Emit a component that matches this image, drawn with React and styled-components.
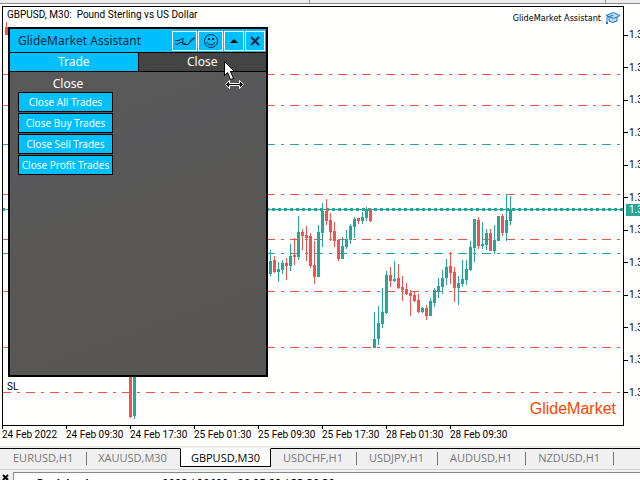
import React from 'react'
import styled, { createGlobalStyle } from 'styled-components'

const UP = '#26a69a'
const DOWN = '#ef5350'

// x, high, body top, body bottom, low, colour
const candles = [
  [6, 22, 27, 35, 35, DOWN],
  [130, 360, 360, 417, 418, DOWN],
  [134, 360, 360, 416, 419, UP],
  [270, 250, 261, 274, 276, UP],
  [274, 256, 260, 272, 273, DOWN],
  [278, 262, 269, 272, 282, UP],
  [282, 260, 263, 270, 274, UP],
  [286, 258, 263, 266, 280, DOWN],
  [290, 244, 256, 266, 271, UP],
  [294, 238, 255, 257, 265, DOWN],
  [298, 216, 232, 257, 260, UP],
  [302, 229, 232, 236, 250, DOWN],
  [306, 226, 235, 238, 261, DOWN],
  [310, 233, 236, 266, 268, DOWN],
  [314, 241, 265, 277, 284, DOWN],
  [318, 225, 232, 277, 277, UP],
  [322, 203, 211, 233, 247, UP],
  [326, 199, 211, 221, 225, DOWN],
  [330, 213, 220, 232, 241, DOWN],
  [334, 222, 231, 241, 247, DOWN],
  [338, 240, 240, 259, 261, DOWN],
  [342, 237, 246, 259, 259, UP],
  [346, 230, 239, 247, 249, UP],
  [350, 224, 226, 240, 244, UP],
  [354, 217, 219, 227, 238, UP],
  [358, 218, 218, 221, 224, DOWN],
  [362, 212, 217, 221, 224, UP],
  [366, 207, 210, 218, 221, UP],
  [370, 209, 209, 221, 222, DOWN],
  [374, 312, 339, 348, 348, UP],
  [378, 306, 323, 339, 345, UP],
  [382, 288, 312, 324, 328, UP],
  [386, 271, 275, 313, 314, UP],
  [390, 267, 275, 281, 287, DOWN],
  [394, 261, 279, 281, 282, UP],
  [398, 264, 278, 288, 289, DOWN],
  [402, 276, 287, 290, 301, DOWN],
  [406, 283, 289, 294, 295, DOWN],
  [410, 290, 293, 296, 316, DOWN],
  [414, 292, 295, 301, 302, DOWN],
  [418, 294, 300, 312, 313, DOWN],
  [422, 307, 308, 312, 313, UP],
  [426, 305, 308, 316, 320, DOWN],
  [430, 298, 301, 316, 316, UP],
  [434, 288, 290, 303, 307, UP],
  [438, 278, 286, 291, 298, UP],
  [442, 270, 278, 287, 294, UP],
  [446, 259, 267, 278, 285, UP],
  [450, 252, 266, 273, 284, DOWN],
  [454, 267, 272, 288, 302, DOWN],
  [458, 276, 283, 288, 305, UP],
  [462, 260, 279, 284, 287, UP],
  [466, 260, 269, 280, 285, UP],
  [470, 241, 247, 270, 271, UP],
  [474, 219, 219, 248, 262, UP],
  [478, 217, 220, 246, 249, DOWN],
  [482, 222, 244, 246, 249, UP],
  [486, 229, 233, 245, 250, UP],
  [490, 229, 233, 251, 251, DOWN],
  [494, 225, 240, 251, 254, UP],
  [498, 216, 216, 241, 241, UP],
  [502, 214, 216, 233, 236, DOWN],
  [506, 194, 220, 233, 241, UP],
  [510, 196, 210, 221, 225, UP],
]

const levels = [
  [74, DOWN],
  [105, DOWN],
  [144, UP],
  [194, DOWN],
  [239, DOWN],
  [253, UP],
  [291, DOWN],
  [347, DOWN],
  [392, DOWN],
]

const dates = [
  '24 Feb 2022',
  '24 Feb 09:30',
  '24 Feb 17:30',
  '25 Feb 01:30',
  '25 Feb 09:30',
  '25 Feb 17:30',
  '28 Feb 01:30',
  '28 Feb 09:30',
]

const symbols = [
  'EURUSD,H1',
  'XAUUSD,M30',
  'GBPUSD,M30',
  'USDCHF,H1',
  'USDJPY,H1',
  'AUDUSD,H1',
  'NZDUSD,H1',
]

const actions = [
  'Close All Trades',
  'Close Buy Trades',
  'Close Sell Trades',
  'Close Profit Trades',
]

const GlobalStyle = createGlobalStyle`
  * {
    box-sizing: border-box;
  }
  body {
    margin: 0;
    background: #f0f0f0;
  }
  button {
    margin: 0;
    padding: 0;
    border: 0;
    border-radius: 0;
    background: none;
    color: inherit;
    font: inherit;
    white-space: nowrap;
  }
`

const Terminal = styled.main`
  display: flex;
  flex-direction: column;
  height: 100vh;
  overflow: hidden;
  color: #000;
  font-family: Roboto, 'Liberation Sans', sans-serif;
  font-size: 10px;
  line-height: 12px;
`

const ToolbarEdge = styled.div`
  display: flex;
  flex: none;
  justify-content: space-between;
  height: 4px;
  padding: 0 34px 0 309px;
  border-bottom: 1px solid #888;
  background: #ececec;

  i {
    width: 1px;
    background: #999;
  }
`

const ChartWindow = styled.section`
  display: flex;
  flex: none;
  flex-direction: column;
  padding: 2px 0 0 2px;
  background: #fffffd;
  border-bottom: 1px solid #e2e2e2;
`

const ChartRow = styled.div`
  display: flex;
`

const Plot = styled.div`
  position: relative;
  flex: 1;
  min-width: 0;
  border: 1px solid #000;
`

const Drawing = styled.svg`
  display: block;
  width: 100%;
  height: 418px;
`

const ChartTitle = styled.h1`
  position: absolute;
  top: 2px;
  left: 4px;
  margin: 0;
  font-size: inherit;
  font-weight: normal;
  white-space: pre;
`

const ExpertName = styled.div`
  position: absolute;
  top: 4px;
  right: 2px;
  display: flex;
  align-items: center;
  gap: 4px;
  font-family: 'DejaVu Sans Condensed', 'DejaVu Sans', sans-serif;
  font-size: 9px;

  svg {
    display: block;
  }
`

const StopLabel = styled.span`
  position: absolute;
  bottom: 32px;
  left: 4px;
`

const Watermark = styled.span`
  position: absolute;
  right: 7px;
  bottom: 6px;
  color: #ff4500;
  font-family: 'Liberation Sans', Arial, sans-serif;
  font-size: 16px;
  line-height: 20px;
`

const PriceAxis = styled.div`
  position: relative;
  display: flex;
  flex: none;
  flex-direction: column;
  justify-content: space-between;
  width: 16px;
  padding: 23px 0 27px;
  overflow: hidden;
`

const Price = styled.span`
  display: flex;
  align-items: center;
  gap: 1px;
  height: 12px;

  &::before {
    flex: none;
    width: 4px;
    height: 1px;
    background: #000;
    content: '';
  }
`

const Bid = styled.span`
  position: absolute;
  top: 198px;
  right: 0;
  left: 2px;
  padding-left: 3px;
  background: ${UP};
  color: #fff;
  line-height: 12px;
`

const DateAxis = styled.div`
  display: flex;
  height: 20px;
`

const DateMark = styled.span`
  flex: none;
  width: 64px;
  white-space: nowrap;

  &::before {
    display: block;
    width: 1px;
    height: 3px;
    background: #000;
    content: '';
  }
`

const Panel = styled.section`
  position: absolute;
  top: 20px;
  left: 5px;
  width: 260px;
  height: 350px;
  border: 2px solid #000;
  background: linear-gradient(160deg, #585858 0%, #595959 20%, #58585a 36%, #585753 60%, #575652 100%);
  color: #fff;
  font-family: 'Noto Sans', 'Open Sans', sans-serif;
  font-size: 12px;
`

const PanelHeader = styled.header`
  display: flex;
  align-items: center;
  gap: 1px;
  height: 24px;
  padding: 0 1px 0 8px;
  border-bottom: 1px solid #000;
  background: #00bfff;
  color: #10283c;
`

const PanelTitle = styled.h2`
  flex: 1;
  margin: 0;
  font-size: 12px;
  font-weight: normal;
  line-height: 16px;
`

const IconButton = styled.button`
  display: flex;
  align-items: center;
  justify-content: center;
  width: ${({ $wide }) => ($wide ? 25 : 20)}px;
  height: 20px;
  border: 1px solid #fff;
`

const PanelTabs = styled.div`
  display: flex;
  height: 19px;
  border-bottom: 1px solid #000;
`

const PanelTab = styled.button`
  flex: 1;
  background: ${({ $active }) => ($active ? '#00bfff' : '#444')};
  line-height: 18px;

  & + & {
    border-left: 1px solid #000;
  }
`

const Actions = styled.div`
  display: flex;
  flex-direction: column;
  gap: 1px;
  width: 111px;
  padding: 4px 8px;
`

const GroupTitle = styled.h3`
  margin: 0;
  padding-left: 5px;
  font-size: 12px;
  font-weight: normal;
  line-height: 15px;
  text-align: center;
`

const ActionButton = styled.button`
  display: flex;
  align-items: center;
  justify-content: center;
  height: 20px;
  border: 1px solid #000;
  background: #00bfff;
  font-size: 10px;
`

const Cursor = styled.svg`
  position: absolute;
  top: 32px;
  left: 213px;
`

const SymbolTabs = styled.nav`
  display: flex;
  flex: none;
  height: 19px;
  margin-top: 1px;
  color: #777;
  font-family: 'Open Sans', 'Noto Sans', sans-serif;
  font-size: 11px;
`

const SymbolTab = styled.button`
  position: relative;
  flex: none;
  padding: 0 14px 0 11px;
  border-top: 1px solid #000;

  &::after {
    position: absolute;
    top: 3px;
    right: 0;
    width: 1px;
    height: 13px;
    background: #777;
    content: '';
  }

  &:first-child {
    padding-left: 13px;
  }

  &:has(+ [aria-current]) {
    padding-right: 13px;
  }

  &:has(+ [aria-current])::after {
    display: none;
  }

  &[aria-current] {
    padding: 0 10px;
    border: 1px solid #000;
    border-top-color: #fff;
    background: #fff;
    color: #000;
  }

  &[aria-current]::after {
    display: none;
  }

  &[aria-current] ~ & {
    padding-left: 12px;
  }
`

const TabsRest = styled.span`
  flex: 1;
  border-top: 1px solid #000;
`

const Toolbox = styled.footer`
  display: flex;
  flex: 1;
  min-height: 0;
  margin-top: 2px;
  border-top: 1px solid #d4d4d4;
`

const CloseToolbox = styled.button`
  display: flex;
  align-items: flex-end;
  width: 13px;
  height: 11px;
  padding-left: 2px;
`

const ToolboxRow = styled.div`
  display: flex;
  flex: 1;
  gap: 61px;
  margin-top: 2px;
  padding: 5px 0 0 23px;
  border-top: 1px solid #888;
  border-left: 1px solid #888;
  background: #fff;
  font-family: 'DejaVu Sans Condensed', 'DejaVu Sans', sans-serif;
  font-weight: bold;
  white-space: pre;
`

const ChartDrawing = () => (
  <Drawing shapeRendering="crispEdges" aria-hidden="true">
    <g transform="translate(-3 -7)">
      {levels.map(([y, color]) => (
        <line key={y} x1="2" x2="100%" y1={y + 0.5} y2={y + 0.5} stroke={color} strokeDasharray="9 6 3 6" />
      ))}
      <rect x="3" y="209" width="100%" height="1" fill={UP} />
      <line x1="2" x2="101%" y1="209.5" y2="209.5" stroke={UP} strokeWidth="3" strokeDasharray="3 3" />
      {candles.map(([x, high, top, bottom, low, color]) => (
        <g key={x} fill={color}>
          <rect x={x} y={high} width="1" height={low - high} />
          <rect x={x - 1} y={top} width="3" height={bottom - top} />
        </g>
      ))}
    </g>
  </Drawing>
)

const CapIcon = () => (
  <svg width="16" height="14" viewBox="0 0 16 14" fill="#b9dcf5" stroke="#1a76c4" aria-hidden="true">
    <path d="M4 6v4q4 3 8 0V6" />
    <path d="M1 4.5L8.500 1.500 15 4.500 8.500 7.500z" />
    <path d="M8 4.500L2 6v6" fill="none" />
    <path d="M1 11h2v2H1z" fill="#1a76c4" stroke="none" />
  </svg>
)

// two lines that cross: a low one with a hump, a high one that ends top right
const WaveIcon = () => (
  <svg width="22" height="14" viewBox="0 0 22 14" fill="none" stroke="#10283c" aria-hidden="true">
    <path d="M1 6.500h3q2 0 4-2 2-1 1 2t0 4h4q2 0 3-3t5-3" />
    <path d="M1 9.500q2 2 4 0t4-1 3 2 4-2 4-5" />
  </svg>
)

const SmileIcon = () => (
  <svg width="16" height="16" viewBox="0 0 16 16" fill="none" stroke="#10283c" aria-hidden="true">
    <circle cx="8" cy="8" r="6.500" />
    <path d="M4 9q1 3 4 3t4-3" />
    <path d="M5 5h2v2H5zM9 5h2v2H9z" fill="#10283c" stroke="none" />
  </svg>
)

const UpIcon = () => (
  <svg width="10" height="6" viewBox="0 0 10 6" aria-hidden="true">
    <path d="M5 1l4 4H1z" fill="#000" />
  </svg>
)

const CrossIcon = () => (
  <svg width="12" height="12" viewBox="0 0 12 12" aria-hidden="true">
    <path d="M2 2l8 8M10 2l-8 8" stroke="#10283c" strokeWidth="2" />
  </svg>
)

const Pointer = () => (
  <Cursor width="22" height="30" viewBox="0 0 22 30" aria-hidden="true">
    <path d="M1.500 .5v14l3-3 3 7 3-1-3-7h4z" fill="#fff" stroke="#000" />
    <path
      d="M2.500 23.500l4-4v3h10v-3l4 4-4 4v-3h-10v3z"
      fill="#000"
      stroke="#fff"
    />
  </Cursor>
)

const AssistantPanel = () => (
  <Panel>
    <PanelHeader>
      <PanelTitle>GlideMarket Assistant</PanelTitle>
      <IconButton $wide aria-label="Indicators">
        <WaveIcon />
      </IconButton>
      <IconButton $wide aria-label="Feedback">
        <SmileIcon />
      </IconButton>
      <IconButton aria-label="Collapse">
        <UpIcon />
      </IconButton>
      <IconButton aria-label="Close panel">
        <CrossIcon />
      </IconButton>
    </PanelHeader>
    <PanelTabs>
      <PanelTab $active>Trade</PanelTab>
      <PanelTab>Close</PanelTab>
    </PanelTabs>
    <Actions>
      <GroupTitle>Close</GroupTitle>
      {actions.map((action) => (
        <ActionButton key={action}>{action}</ActionButton>
      ))}
    </Actions>
    <Pointer />
  </Panel>
)

const App = () => (
  <Terminal>
    <GlobalStyle />
    <ToolbarEdge>
      <i />
      <i />
    </ToolbarEdge>
    <ChartWindow>
      <ChartRow>
        <Plot>
          <ChartDrawing />
          <ChartTitle>{'GBPUSD, M30:  Pound Sterling vs US Dollar'}</ChartTitle>
          <ExpertName>
            GlideMarket Assistant
            <CapIcon />
          </ExpertName>
          <StopLabel>SL</StopLabel>
          <Watermark>GlideMarket</Watermark>
          <AssistantPanel />
        </Plot>
        <PriceAxis>
          {Array.from({ length: 12 }, (_, i) => (
            <Price key={i}>1.3</Price>
          ))}
          <Bid>1.3</Bid>
        </PriceAxis>
      </ChartRow>
      <DateAxis>
        {dates.map((date) => (
          <DateMark key={date}>{date}</DateMark>
        ))}
      </DateAxis>
    </ChartWindow>
    <SymbolTabs>
      {symbols.map((symbol) => (
        <SymbolTab key={symbol} aria-current={symbol === 'GBPUSD,M30' ? 'page' : undefined}>
          {symbol}
        </SymbolTab>
      ))}
      <TabsRest />
    </SymbolTabs>
    <Toolbox>
      <CloseToolbox aria-label="Close toolbox">
        <svg width="7" height="7" viewBox="0 0 7 7" aria-hidden="true">
          <path d="M1 1l5 5M6 1l-5 5" stroke="#000" strokeWidth="2" />
        </svg>
      </CloseToolbox>
      <ToolboxRow>
        <span>Buginbuginn</span>
        <span>1998 / 10400   20 15 21 / 33 30 30</span>
      </ToolboxRow>
    </Toolbox>
  </Terminal>
)

export default App
